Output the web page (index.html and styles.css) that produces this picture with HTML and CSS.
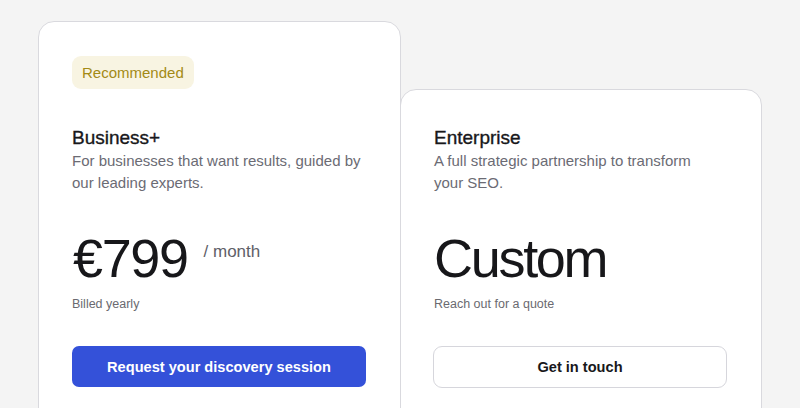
FILE: index.html
```html
<!DOCTYPE html>
<html>
<head>
<meta charset="utf-8">
<link rel="stylesheet" href="styles.css">
</head>
<body>
<div class="plans">
  <div class="card card-featured">
    <span class="badge">Recommended</span>
    <h2 class="title">Business+</h2>
    <p class="desc">For businesses that want results, guided by our leading experts.</p>
    <div class="price-row">
      <span class="price">€799</span>
      <span class="period">/ month</span>
    </div>
    <p class="note">Billed yearly</p>
    <a class="btn btn-primary">Request your discovery session</a>
  </div>
  <div class="card card-plain">
    <h2 class="title">Enterprise</h2>
    <p class="desc desc-narrow">A full strategic partnership to transform your SEO.</p>
    <div class="price-row">
      <span class="price price-custom">Custom</span>
    </div>
    <p class="note">Reach out for a quote</p>
    <a class="btn btn-outline">Get in touch</a>
  </div>
</div>
</body>
</html>
```
FILE: styles.css
```css
html, body {
  margin: 0;
  padding: 0;
  background: #f4f4f4;
  font-family: "Liberation Sans", Arial, sans-serif;
  overflow: hidden;
}
.plans {
  display: flex;
  align-items: flex-start;
  padding: 21px 0 0 38px;
}
.card {
  box-sizing: border-box;
  background: #fff;
  border: 1px solid #d9d9de;
  border-radius: 16px;
  padding: 34px 33px 40px 33px;
  display: flex;
  flex-direction: column;
  align-items: flex-start;
  height: 460px;
}
.card-featured {
  width: 363px;
  position: relative;
  z-index: 1;
}
.card-plain {
  width: 362px;
  margin-top: 68px;
  margin-left: -1px;
}
.badge {
  box-sizing: border-box;
  height: 33px;
  line-height: 33px;
  padding: 0 10px;
  background: #f8f4e2;
  color: #a38a15;
  border-radius: 9px;
  font-size: 15px;
  margin-bottom: 35px;
}
.title {
  margin: 0;
  padding-top: 2px;
  font-size: 19px;
  line-height: 24px;
  font-weight: 400;
  -webkit-text-stroke: 0.35px #18181b;
  color: #18181b;
}
.desc {
  margin: 0;
  font-size: 15px;
  line-height: 22px;
  color: #6b6b74;
  width: 292px;
}
.desc-narrow {
  width: 275px;
}
.price-row {
  display: flex;
  align-items: flex-start;
  margin-top: 37px;
}
.price {
  font-size: 54px;
  line-height: 54px;
  color: #17171a;
  letter-spacing: -1.4px;
  margin-left: 1px;
}
.price-custom {
  letter-spacing: -2.3px;
  margin-left: 0;
}
.period {
  font-size: 17px;
  line-height: 20px;
  color: #606068;
  margin-left: 16px;
  margin-top: 11px;
}
.note {
  margin: 10px 0 0 0;
  font-size: 12.5px;
  line-height: 18px;
  color: #6a6a70;
}
.btn {
  box-sizing: border-box;
  margin-top: 33px;
  width: 294px;
  height: 41px;
  display: flex;
  align-items: center;
  justify-content: center;
  font-size: 14.6px;
  font-weight: 700;
  border-radius: 7px;
}
.btn-primary {
  background: #3451d9;
  color: #fff;
}
.btn-outline {
  border: 1px solid #d6d6dc;
  color: #18181b;
  height: 42px;
  border-radius: 9px;
  width: 294px;
  margin-left: -1px;
}
```
